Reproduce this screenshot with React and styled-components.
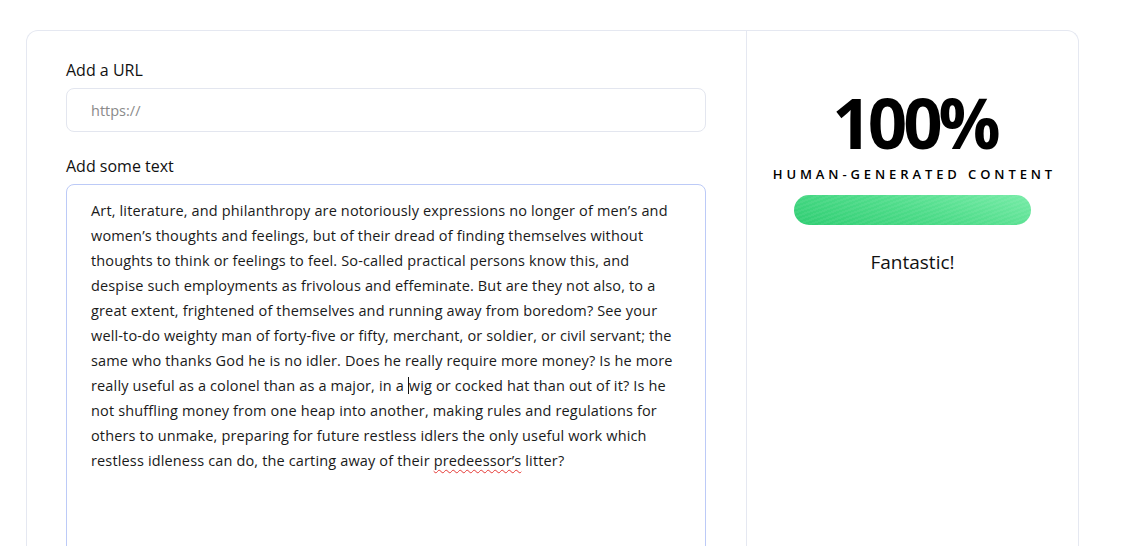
import React from "react";
import styled, { createGlobalStyle } from "styled-components";

const GlobalStyle = createGlobalStyle`
  html, body { margin: 0; padding: 0; background: #ffffff; }
  body { font-family: "Open Sans", "Noto Sans", sans-serif; color: #111; overflow: hidden; }
`;

const Page = styled.div`
  padding: 30px 46px 0 26px;
  height: 546px;
  box-sizing: border-box;
`;

const Card = styled.div`
  display: grid;
  grid-template-columns: 719px 1fr;
  border: 1px solid #e5e8f1;
  border-bottom: none;
  border-radius: 12px 12px 0 0;
  height: 530px;
  box-sizing: border-box;
  background: #fff;
`;

const FormColumn = styled.div`
  padding: 28px 40px 0 39px;
  display: flex;
  flex-direction: column;
`;

const Label = styled.label`
  font-size: 16px;
  line-height: 22px;
  color: #111;
  margin-bottom: 7px;
`;

const UrlInput = styled.div`
  height: 44px;
  box-sizing: border-box;
  border: 1px solid #e3e6ef;
  border-radius: 8px;
  padding: 0 24px;
  display: flex;
  align-items: center;
  font-size: 14.5px;
  color: #8a8a8a;
  margin-bottom: 23px;
`;

const TextBox = styled.div`
  border: 1px solid #bccaf7;
  border-radius: 8px;
  padding: 13px 24px 0 24px;
  height: 420px;
  box-sizing: border-box;
  font-size: 14.5px;
  letter-spacing: 0.15px;
  line-height: 25px;
  color: #1a1a1a;
`;

const Line = styled.div`
  white-space: nowrap;
`;

const Caret = styled.span`
  display: inline-block;
  width: 1px;
  height: 17px;
  background: #111;
  vertical-align: -3px;
`;

const Misspelled = styled.span`
  text-decoration: underline wavy #e53935;
  text-decoration-thickness: 1px;
  text-underline-offset: 3px;
`;

const ScoreColumn = styled.div`
  border-left: 1px solid #e5e8f1;
  display: flex;
  flex-direction: column;
  align-items: center;
  padding-top: 47px;
`;

const Score = styled.div`
  font-size: 69px;
  font-weight: 700;
  line-height: 88px;
  letter-spacing: -4px;
  margin-right: -4px;
  color: #000;
`;

const Caption = styled.div`
  font-size: 13px;
  font-weight: 600;
  letter-spacing: 3.9px;
  margin-right: -3.9px;
  color: #000;
  margin-top: -1px;
  line-height: 18px;
`;

const Bar = styled.div`
  width: 237px;
  height: 30px;
  border-radius: 15px;
  margin-top: 12px;
  background:
    repeating-linear-gradient(160deg, rgba(255,255,255,0.06) 0 2px, rgba(255,255,255,0) 2px 4px),
    linear-gradient(15deg, #2fcd72 0%, #4fdc8a 50%, #78eca8 100%);
`;

const Verdict = styled.div`
  margin-top: 24px;
  font-size: 19px;
  line-height: 26px;
  color: #111;
`;

const lines = [
  "Art, literature, and philanthropy are notoriously expressions no longer of men’s and",
  "women’s thoughts and feelings, but of their dread of finding themselves without",
  "thoughts to think or feelings to feel. So-called practical persons know this, and",
  "despise such employments as frivolous and effeminate. But are they not also, to a",
  "great extent, frightened of themselves and running away from boredom? See your",
  "well-to-do weighty man of forty-five or fifty, merchant, or soldier, or civil servant; the",
  "same who thanks God he is no idler. Does he really require more money? Is he more",
];

export default function App() {
  return (
    <>
      <GlobalStyle />
      <Page>
        <Card>
          <FormColumn>
            <Label>Add a URL</Label>
            <UrlInput>https://</UrlInput>
            <Label>Add some text</Label>
            <TextBox>
              {lines.map((l, i) => (
                <Line key={i}>{l}</Line>
              ))}
              <Line>
                really useful as a colonel than as a major, in a <Caret />wig or cocked hat than out of it? Is he
              </Line>
              <Line>not shuffling money from one heap into another, making rules and regulations for</Line>
              <Line>others to unmake, preparing for future restless idlers the only useful work which</Line>
              <Line>
                restless idleness can do, the carting away of their <Misspelled>predeessor’s</Misspelled> litter?
              </Line>
            </TextBox>
          </FormColumn>
          <ScoreColumn>
            <Score>100%</Score>
            <Caption>HUMAN-GENERATED CONTENT</Caption>
            <Bar />
            <Verdict>Fantastic!</Verdict>
          </ScoreColumn>
        </Card>
      </Page>
    </>
  );
}
